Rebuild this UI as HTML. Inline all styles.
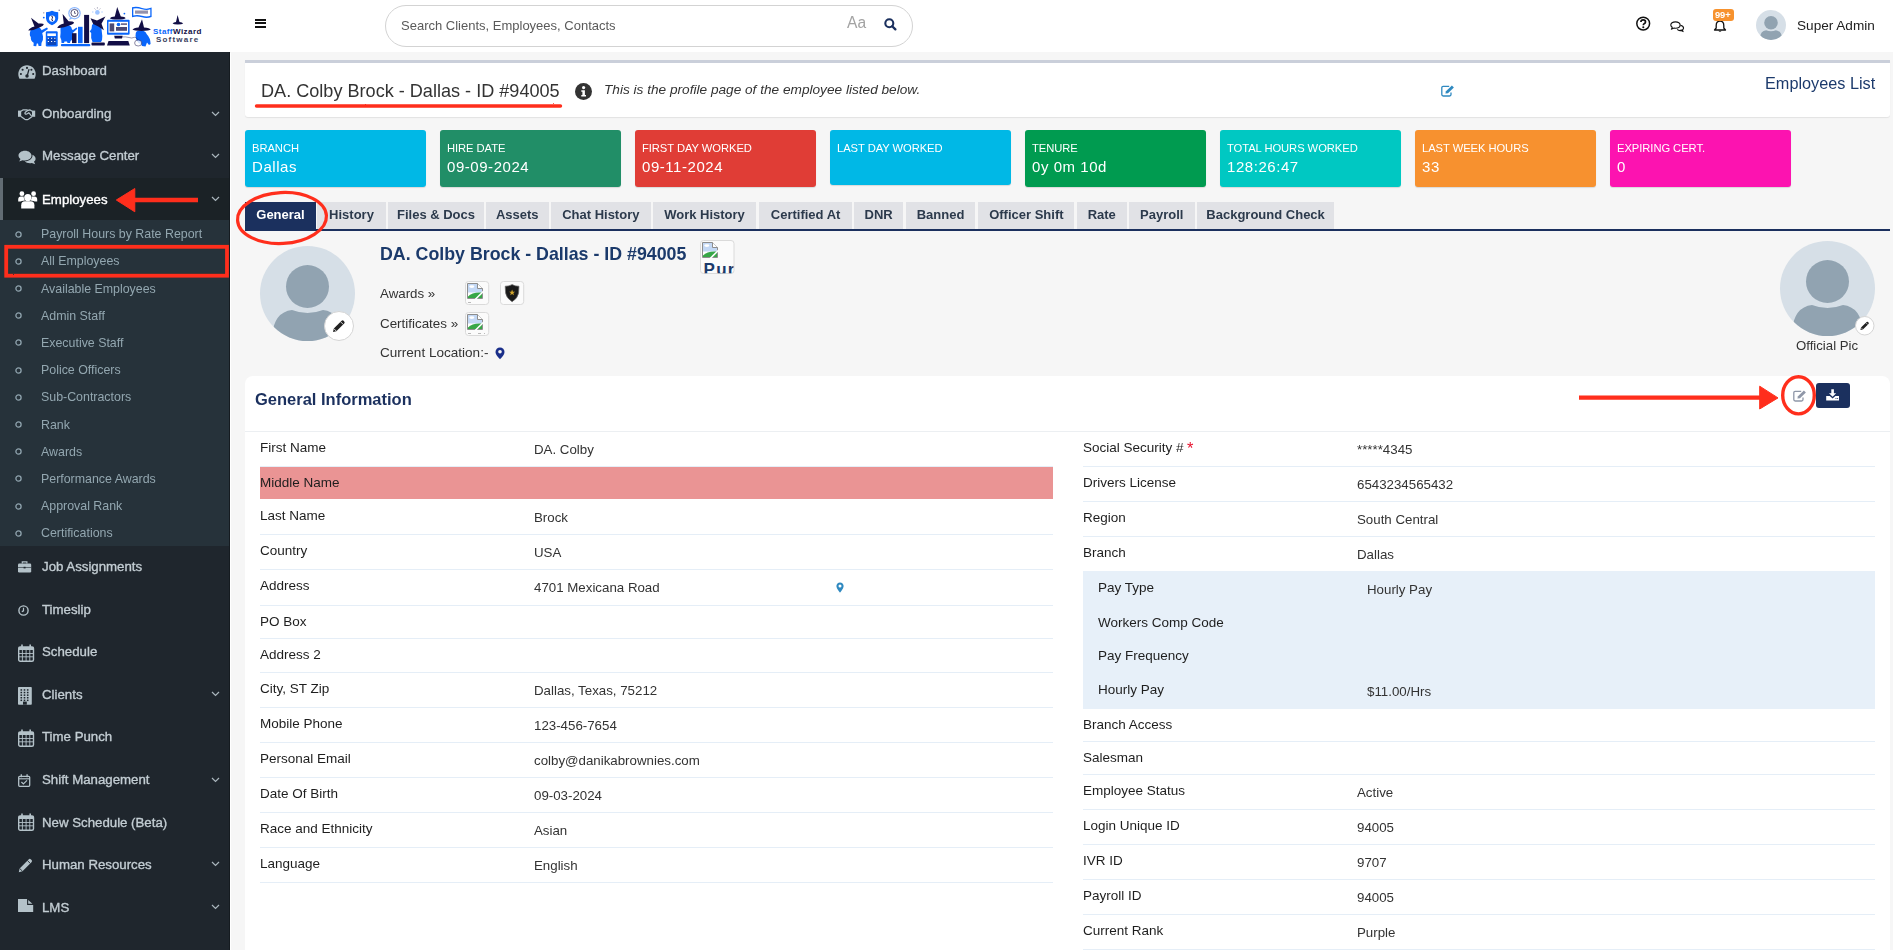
<!DOCTYPE html><html><head><meta charset="utf-8"><style>
html,body{margin:0;padding:0;}
body{width:1893px;height:950px;overflow:hidden;position:relative;background:#f6f6f6;font-family:"Liberation Sans", sans-serif;}
.t{position:absolute;white-space:nowrap;line-height:1;will-change:transform;}
.r{position:absolute;}
svg.r{overflow:visible;}
</style></head><body>
<div class="r" style="left:0px;top:0px;width:1893px;height:52px;background:#fff;"></div>
<svg class="r" style="left:0px;top:0px;" width="230" height="52" viewBox="0 0 230 52">
<g fill="#7fb0ff" opacity="0.9">
 <circle cx="74.5" cy="13.2" r="6.2"/>
 <path d="M70 17.5 L69 20 L72.5 18.6Z"/>
</g>
<circle cx="74.5" cy="13.2" r="5" fill="#fff"/>
<circle cx="74.5" cy="13" r="3.6" fill="none" stroke="#120e46" stroke-width="0.9" opacity="0.8"/>
<path d="M74.5 11 L74.5 13.3 L76 13.3" fill="none" stroke="#120e46" stroke-width="0.6"/>
<g fill="#0a66fb">
 <path d="M30.6 30 Q31 26.5 35.5 26.8 Q40.5 27 41.5 30 L43 36.5 Q43.5 40.5 41.5 43 L41.3 46 L38.6 46 L38 43.5 L36.8 43.5 L36.2 46.2 L33.5 46 L33.7 42.8 Q30.5 41 30.8 37 Q29 35.5 30.6 30Z"/>
 <path d="M40 31 L47 27.5 L48 29 L41.5 33.5Z"/>
 <rect x="45.8" y="31.2" width="11.9" height="15.3" rx="1.2"/>
 <path d="M46 12.3 Q49.5 12 52 10.8 Q54.6 12 58.2 12.3 L58.2 18.5 Q57.5 23 52 25.3 Q46.5 23 46 18.5Z"/>
 <path d="M60.5 28.5 Q61 24.8 66 24.8 Q71.5 25 72 29.5 L73 30 L76.5 27.6 L77.3 28.7 L72.7 33 L72.3 38.5 Q71.8 40.5 70.5 41 L70 43 L67.5 43 L67 41.5 L64.5 41.5 L64 43 L61.5 43 L61.3 40 Q59.5 37 60.6 33Z"/>
 <rect x="78" y="26.8" width="4.6" height="16.4"/>
 <rect x="60.9" y="44.1" width="29.4" height="2.2" rx="1"/>
 <path d="M92 25 Q93.5 22.5 97 23 Q100.5 24 101.5 29 L102.3 36 Q102.5 40 101 42 L92.5 42 Q90.5 38 91.2 33 L89.7 31.5 L91.5 29Z"/>
 <rect x="107" y="19.8" width="22.6" height="14.9" rx="1"/>
 <path d="M135.8 33 Q136.5 30.6 141 30.6 Q145.5 31 146.6 34 Q150.5 38 150.6 44 L149 45 L147 42.5 L145.5 46.5 L142 46 L141 44 Q137.5 43 136.5 40 Q134.8 36 135.8 33Z"/>
 <path d="M132 7.2 Q137 6 142 8 Q147 9.5 151.6 7.6 L151.6 17 Q147 18.8 142 17.3 Q137 15.8 132 17.2Z"/>
</g>
<g fill="#fff">
 <rect x="47.3" y="33.4" width="8.6" height="2.6"/>
 <circle cx="52.1" cy="18.6" r="3.1"/>
 <rect x="108.5" y="21.8" width="19.5" height="10.9"/>
 <path d="M133.3 8.6 Q137 7.6 142 9.3 Q147 10.8 150.3 9.3 L150.3 15.8 Q147 17.2 142 15.8 Q137 14.3 133.3 15.6Z"/>
</g>
<g fill="#120e46">
 <path d="M28.3 30.6 Q29.5 27.8 34.5 26.5 L31 17.8 L38.5 23.6 Q42.5 23 43.7 24 Q44 25.6 39.5 27.6 Q33.5 30.8 28.3 30.6Z"/>
 <path d="M57.2 27.8 Q58.5 25 63.8 23.5 L62.6 14.1 L68.6 21.3 Q73.3 21.4 74 22.5 Q74.2 24 69.2 25.6 Q62.5 28.6 57.2 27.8Z"/>
 <rect x="72" y="33.2" width="4.5" height="9.9"/>
 <rect x="84.1" y="14.9" width="5" height="28.2"/>
 <path d="M90.5 18.3 L97 20.5 L105.4 16.6 L101.5 23.8 L103.9 30.3 L98.3 26.4 L93.2 24.1Z"/>
 <rect x="91.5" y="42.6" width="13.3" height="3" rx="0.8"/>
 <path d="M109.8 18.2 Q111 16.8 114.8 16.6 L117.2 7 L120.8 16.6 Q125 16.8 125.6 18.3 Q124.5 19.6 117.7 19.6 Q111 19.6 109.8 18.2Z"/>
 <path d="M114.2 35.7 L122.6 35.7 L122 38.6 L114.8 38.6Z"/>
 <path d="M107 45.6 L108.5 41.1 L128.3 41.1 L129.8 45.6Z"/>
 <path d="M132.5 29.6 Q133.5 27.8 138.5 27.4 L142 19.3 L144 27.4 Q150 27.8 150.8 29.6 Q149.5 31 141.6 31 Q133.7 31 132.5 29.6Z"/>
 <path d="M172.6 23.4 Q173.5 22.2 176 22 L177.6 15 L179.5 22 Q182.4 22.2 183.2 23.4 Q182 24.4 177.8 24.4 Q173.6 24.4 172.6 23.4Z"/>
</g>
<g fill="#120e46" opacity="0.75">
 <rect x="109.6" y="23.4" width="4.6" height="8" />
 <rect x="116" y="27" width="11" height="3.8"/>
 <rect x="121" y="23.4" width="6" height="1.4"/>
 <rect x="135" y="10.5" width="13" height="3.2" opacity="0.6"/>
 <rect x="47.5" y="37.5" width="8.5" height="7.5" opacity="0.5"/>
</g>
<circle cx="118.5" cy="24.5" r="1.8" fill="#0a66fb"/>
<g fill="#fff"><rect x="47.8" y="37.8" width="1.2" height="1"/><rect x="51" y="37.8" width="1.2" height="1"/><rect x="54.2" y="37.8" width="1.2" height="1"/><rect x="47.8" y="41" width="1.2" height="1"/><rect x="51" y="41" width="1.2" height="1"/><rect x="54.2" y="41" width="1.2" height="1"/></g>
<path d="M51.3 16.2 Q53.5 16 52.2 18.5 Q51 20.6 53 20.8" fill="none" stroke="#120e46" stroke-width="0.9"/>
<g fill="#9cc3ff">
 <circle cx="97.4" cy="12.4" r="2.3"/>
 <path d="M92 12 L93.5 12 M101.3 12 L102.8 12" stroke="#9cc3ff" stroke-width="0.8"/>
</g>
<path d="M94.5 8.5 L95.5 9.5 M100.3 8.5 L99.3 9.5 M97.4 7.2 L97.4 8.6" stroke="#120e46" stroke-width="0.6" opacity="0.6"/>
<circle cx="124.4" cy="13.6" r="0.9" fill="#0a66fb"/>
<circle cx="43.8" cy="17.6" r="0.9" fill="#0a66fb"/>
<circle cx="43.8" cy="12.8" r="0.6" fill="#120e46" opacity="0.6"/>
<circle cx="59.2" cy="10.2" r="0.7" fill="#120e46" opacity="0.6"/>
<path d="M120.6 37 Q126 36.5 129 37.5 Q131.5 38.6 134.5 37.3 Q136.5 37 137.5 39.5" fill="none" stroke="#120e46" stroke-width="0.6" opacity="0.7"/>
<ellipse cx="138.2" cy="43" rx="3.6" ry="3" fill="#fff" stroke="#120e46" stroke-width="0.6" opacity="0.8"/>
<text x="153" y="33.6" font-family="Liberation Sans" font-weight="700" font-size="8" fill="#0a66fb" letter-spacing="0.44">Staff<tspan fill="#120e46">Wizard</tspan></text>
<text x="156" y="41.7" font-family="Liberation Sans" font-weight="700" font-size="8" fill="#3b3e5e" letter-spacing="1.2">Software</text>
</svg>
<div class="r" style="left:255px;top:18.5px;width:11px;height:2px;background:#111;"></div>
<div class="r" style="left:255px;top:22.4px;width:11px;height:2px;background:#111;"></div>
<div class="r" style="left:255px;top:26.2px;width:11px;height:2px;background:#111;"></div>
<div class="r" style="left:385px;top:5px;width:528px;height:42px;background:#fff;box-sizing:border-box;border:1px solid #d3d3d3;border-radius:21px;"></div>
<div class="t" style="left:400.5px;top:18.95px;font-size:13px;color:#5a5a5a;font-weight:400;font-style:normal;letter-spacing:0px;">Search Clients, Employees, Contacts</div>
<div class="t" style="left:847.2px;top:15.14px;font-size:15.6px;color:#a3a3a3;font-weight:400;font-style:normal;letter-spacing:0px;letter-spacing:0px;">Aa</div>
<svg class="r" style="left:883.6px;top:17.6px;" width="13" height="13" viewBox="0 0 13 13"><circle cx="5.3" cy="5.3" r="4.0" fill="none" stroke="#1b305e" stroke-width="2.1"/><path d="M8.2 8.2 L11.4 11.4" stroke="#1b305e" stroke-width="2.3" stroke-linecap="round"/></svg>
<svg class="r" style="left:1635px;top:16px;" width="16" height="16" viewBox="0 0 16 16"><circle cx="8.2" cy="7.6" r="6.4" fill="none" stroke="#111" stroke-width="1.5"/><path d="M5.9 6.1 Q5.9 3.9 8.2 3.9 Q10.5 3.9 10.5 5.9 Q10.5 7.1 9.1 7.8 Q8.3 8.2 8.3 9.3" fill="none" stroke="#111" stroke-width="1.7"/><circle cx="8.3" cy="11.3" r="1.05" fill="#111"/></svg>
<svg class="r" style="left:1670px;top:20.5px;" width="17" height="12" viewBox="0 0 17 12"><g transform="scale(0.88)"><path d="M6.2 1 C2.9 1 0.9 2.7 0.9 4.6 C0.9 5.7 1.5 6.6 2.5 7.2 L1.9 9.2 L4.6 8.0 C5.1 8.1 5.7 8.2 6.2 8.2 C9.5 8.2 11.5 6.5 11.5 4.6 C11.5 2.7 9.5 1 6.2 1Z" fill="none" stroke="#111" stroke-width="1.3"/><path d="M11.9 4.8 C14 5.3 15.4 6.5 15.4 8 C15.4 8.9 14.9 9.7 14.1 10.2 L14.6 11.6 L12.5 10.8 C10.9 11.1 9.2 10.6 8.2 9.6" fill="none" stroke="#111" stroke-width="1.3"/><path d="M12.5 9.2 L14.8 11.8 L11.5 10.8Z" fill="#111"/></g></svg>
<svg class="r" style="left:1713px;top:20px;" width="14" height="13" viewBox="0 0 14 13"><path d="M7 1.2 C4.3 1.2 3.2 3.4 3.2 5.4 L3.2 8 L1.5 10 L12.5 10 L10.8 8 L10.8 5.4 C10.8 3.4 9.7 1.2 7 1.2Z" fill="none" stroke="#111" stroke-width="1.3" stroke-linejoin="round"/><path d="M5.3 10.8 Q7 12.8 8.7 10.8Z" fill="#111"/></svg>
<div class="r" style="left:1713px;top:9px;width:21px;height:12px;background:#f7922e;border-radius:3px;"></div>
<div class="t" style="left:1715.3px;top:10.70px;font-size:9.3px;color:#fff;font-weight:700;font-style:normal;letter-spacing:0px;letter-spacing:-0.1px;">99+</div>
<svg class="r" style="left:1756.0px;top:10.0px;" width="30" height="30" viewBox="0 0 30 30"><defs><clipPath id="c1771"><circle cx="15.0" cy="15.0" r="15.0"/></clipPath></defs>
    <circle cx="15.0" cy="15.0" r="15.0" fill="#d6dfe7"/>
    <g clip-path="url(#c1771)" fill="#91a3b1">
      <circle cx="15.0" cy="12.789473684210526" r="6.789473684210526"/>
      <path d="M3.789473684210526 28.421052631578945 Q4.421052631578947 20.842105263157894 10.105263157894736 20.210526315789473 Q15.0 22.105263157894736 19.894736842105264 20.210526315789473 Q25.57894736842105 20.842105263157894 26.210526315789473 28.421052631578945 L26.210526315789473 31.57894736842105 L3.789473684210526 31.57894736842105Z"/>
    </g></svg>
<div class="t" style="left:1796.5px;top:19.14px;font-size:13.6px;color:#222;font-weight:400;font-style:normal;letter-spacing:0px;">Super Admin</div>
<div class="r" style="left:0px;top:52px;width:230px;height:898px;background:#1f262d;"></div>
<div class="r" style="left:0px;top:178px;width:230px;height:42px;background:#1b2226;"></div>
<div class="r" style="left:0px;top:178px;width:3px;height:42px;background:#626c73;"></div>
<div class="r" style="left:0px;top:220px;width:230px;height:326px;background:#26323a;"></div>
<svg class="r" style="left:17.6px;top:65.3px;" width="18" height="14" viewBox="0 0 18 14"><path d="M9 0.2 C4.1 0.2 0.3 4.2 0.3 9 C0.3 10.8 0.8 12.4 1.5 13.8 L16.5 13.8 C17.2 12.4 17.7 10.8 17.7 9 C17.7 4.2 13.9 0.2 9 0.2Z" fill="#b4c2c9"/><path d="M10.9 4.6 L9.2 10.8" stroke="#1f262d" stroke-width="1.3" stroke-linecap="round"/><circle cx="9" cy="10.9" r="1.75" fill="#1f262d"/><circle cx="9" cy="2.9" r="1.05" fill="#1f262d"/><circle cx="4.6" cy="4.8" r="1.05" fill="#1f262d"/><circle cx="13.4" cy="4.8" r="1.05" fill="#1f262d"/><circle cx="2.9" cy="9" r="1.05" fill="#1f262d"/><circle cx="15.2" cy="9" r="1.05" fill="#1f262d"/></svg>
<svg class="r" style="left:17.9px;top:109.3px;" width="17.2" height="11" viewBox="0 0 17.2 11"><rect x="0" y="1.6" width="3.2" height="6.2" fill="#b4c2c9"/><rect x="14" y="1.6" width="3.2" height="6.2" fill="#b4c2c9"/><path d="M3 2.2 L5.2 0.8 L8.6 0.8 L10 1.3 L11.8 0.8 L14.2 2.2" fill="none" stroke="#b4c2c9" stroke-width="1.2" stroke-linejoin="round"/><path d="M3 7.4 L6.8 10.2 Q8.6 11.2 10.4 10.2 L14.2 7.4" fill="none" stroke="#b4c2c9" stroke-width="1.2" stroke-linejoin="round"/><path d="M10 1.2 L7.3 3.3 Q6.4 4.6 7.6 5.1 Q8.6 5.5 9.8 4.4 L10.8 3.7 L13.6 7.1" fill="none" stroke="#b4c2c9" stroke-width="1.2" stroke-linejoin="round"/></svg>
<svg class="r" style="left:17.6px;top:150px;" width="18" height="15" viewBox="0 0 18 15"><path d="M7 0.8 C3.2 0.8 0.5 3 0.5 5.6 C0.5 7 1.3 8.2 2.5 9 L1.2 11.6 L4.6 10.2 C5.4 10.4 6.2 10.5 7 10.5 C10.8 10.5 13.5 8.3 13.5 5.6 C13.5 3 10.8 0.8 7 0.8Z" fill="#b4c2c9"/><path d="M14.5 4.8 C16.4 5.6 17.6 7.1 17.6 8.8 C17.6 10 17 11 16 11.8 L17.2 14.3 L13.8 13 C11 13.6 8.1 12.8 6.7 11.3 C11 11.4 14.8 9 14.5 4.8Z" fill="#b4c2c9"/></svg>
<svg class="r" style="left:17.6px;top:191px;" width="20" height="18" viewBox="0 0 20 18"><circle cx="9.8" cy="6.6" r="3.6" fill="#fff"/><circle cx="3.9" cy="2.7" r="2.4" fill="#fff"/><circle cx="15.6" cy="2.7" r="2.4" fill="#fff"/><path d="M3.2 17.4 L3.2 14.2 Q3.2 10.3 7 10.3 L12.6 10.3 Q16.4 10.3 16.4 14.2 L16.4 17.4Z" fill="#fff"/><path d="M0.2 10.6 L0.2 8.4 Q0.2 5.4 3 5.4 L5.6 5.4 Q5.8 8 7 9.4 Q3.2 9.8 2.6 10.6Z" fill="#fff"/><path d="M19.2 10.6 L19.2 8.4 Q19.2 5.4 16.4 5.4 L13.8 5.4 Q13.6 8 12.4 9.4 Q16.2 9.8 16.8 10.6Z" fill="#fff"/></svg>
<div class="t" style="left:41.5px;top:64.14px;font-size:13.25px;color:#c3cdd3;font-weight:400;font-style:normal;letter-spacing:0px;-webkit-text-stroke:0.35px #c3cdd3;">Dashboard</div>
<div class="t" style="left:41.5px;top:107.14px;font-size:13.25px;color:#c3cdd3;font-weight:400;font-style:normal;letter-spacing:0px;-webkit-text-stroke:0.35px #c3cdd3;">Onboarding</div>
<svg class="r" style="left:211px;top:111px;" width="9" height="6" viewBox="0 0 9 6"><path d="M1 1 L4.5 4.5 L8 1" fill="none" stroke="#aab6bd" stroke-width="1.2"/></svg>
<div class="t" style="left:41.5px;top:149.14px;font-size:13.25px;color:#c3cdd3;font-weight:400;font-style:normal;letter-spacing:0px;-webkit-text-stroke:0.35px #c3cdd3;">Message Center</div>
<svg class="r" style="left:211px;top:153px;" width="9" height="6" viewBox="0 0 9 6"><path d="M1 1 L4.5 4.5 L8 1" fill="none" stroke="#aab6bd" stroke-width="1.2"/></svg>
<div class="t" style="left:41.5px;top:192.54px;font-size:13.25px;color:#ffffff;font-weight:400;font-style:normal;letter-spacing:0px;-webkit-text-stroke:0.35px #ffffff;">Employees</div>
<svg class="r" style="left:211px;top:196px;" width="9" height="6" viewBox="0 0 9 6"><path d="M1 1 L4.5 4.5 L8 1" fill="none" stroke="#aab6bd" stroke-width="1.2"/></svg>
<svg class="r" style="left:14.5px;top:230.6px;" width="7" height="7" viewBox="0 0 7 7"><circle cx="3.5" cy="3.5" r="2.6" fill="none" stroke="#8fa3ad" stroke-width="1.3"/></svg>
<div class="t" style="left:41px;top:228.16px;font-size:12.4px;color:#93a7b0;font-weight:400;font-style:normal;letter-spacing:0px;">Payroll Hours by Rate Report</div>
<svg class="r" style="left:14.5px;top:257.79999999999995px;" width="7" height="7" viewBox="0 0 7 7"><circle cx="3.5" cy="3.5" r="2.6" fill="none" stroke="#8fa3ad" stroke-width="1.3"/></svg>
<div class="t" style="left:41px;top:255.36px;font-size:12.4px;color:#93a7b0;font-weight:400;font-style:normal;letter-spacing:0px;">All Employees</div>
<svg class="r" style="left:14.5px;top:284.99999999999994px;" width="7" height="7" viewBox="0 0 7 7"><circle cx="3.5" cy="3.5" r="2.6" fill="none" stroke="#8fa3ad" stroke-width="1.3"/></svg>
<div class="t" style="left:41px;top:282.56px;font-size:12.4px;color:#93a7b0;font-weight:400;font-style:normal;letter-spacing:0px;">Available Employees</div>
<svg class="r" style="left:14.5px;top:312.19999999999993px;" width="7" height="7" viewBox="0 0 7 7"><circle cx="3.5" cy="3.5" r="2.6" fill="none" stroke="#8fa3ad" stroke-width="1.3"/></svg>
<div class="t" style="left:41px;top:309.76px;font-size:12.4px;color:#93a7b0;font-weight:400;font-style:normal;letter-spacing:0px;">Admin Staff</div>
<svg class="r" style="left:14.5px;top:339.4px;" width="7" height="7" viewBox="0 0 7 7"><circle cx="3.5" cy="3.5" r="2.6" fill="none" stroke="#8fa3ad" stroke-width="1.3"/></svg>
<div class="t" style="left:41px;top:336.96px;font-size:12.4px;color:#93a7b0;font-weight:400;font-style:normal;letter-spacing:0px;">Executive Staff</div>
<svg class="r" style="left:14.5px;top:366.59999999999997px;" width="7" height="7" viewBox="0 0 7 7"><circle cx="3.5" cy="3.5" r="2.6" fill="none" stroke="#8fa3ad" stroke-width="1.3"/></svg>
<div class="t" style="left:41px;top:364.16px;font-size:12.4px;color:#93a7b0;font-weight:400;font-style:normal;letter-spacing:0px;">Police Officers</div>
<svg class="r" style="left:14.5px;top:393.79999999999995px;" width="7" height="7" viewBox="0 0 7 7"><circle cx="3.5" cy="3.5" r="2.6" fill="none" stroke="#8fa3ad" stroke-width="1.3"/></svg>
<div class="t" style="left:41px;top:391.36px;font-size:12.4px;color:#93a7b0;font-weight:400;font-style:normal;letter-spacing:0px;">Sub-Contractors</div>
<svg class="r" style="left:14.5px;top:421.0px;" width="7" height="7" viewBox="0 0 7 7"><circle cx="3.5" cy="3.5" r="2.6" fill="none" stroke="#8fa3ad" stroke-width="1.3"/></svg>
<div class="t" style="left:41px;top:418.56px;font-size:12.4px;color:#93a7b0;font-weight:400;font-style:normal;letter-spacing:0px;">Rank</div>
<svg class="r" style="left:14.5px;top:448.19999999999993px;" width="7" height="7" viewBox="0 0 7 7"><circle cx="3.5" cy="3.5" r="2.6" fill="none" stroke="#8fa3ad" stroke-width="1.3"/></svg>
<div class="t" style="left:41px;top:445.76px;font-size:12.4px;color:#93a7b0;font-weight:400;font-style:normal;letter-spacing:0px;">Awards</div>
<svg class="r" style="left:14.5px;top:475.4px;" width="7" height="7" viewBox="0 0 7 7"><circle cx="3.5" cy="3.5" r="2.6" fill="none" stroke="#8fa3ad" stroke-width="1.3"/></svg>
<div class="t" style="left:41px;top:472.96px;font-size:12.4px;color:#93a7b0;font-weight:400;font-style:normal;letter-spacing:0px;">Performance Awards</div>
<svg class="r" style="left:14.5px;top:502.59999999999997px;" width="7" height="7" viewBox="0 0 7 7"><circle cx="3.5" cy="3.5" r="2.6" fill="none" stroke="#8fa3ad" stroke-width="1.3"/></svg>
<div class="t" style="left:41px;top:500.16px;font-size:12.4px;color:#93a7b0;font-weight:400;font-style:normal;letter-spacing:0px;">Approval Rank</div>
<svg class="r" style="left:14.5px;top:529.8px;" width="7" height="7" viewBox="0 0 7 7"><circle cx="3.5" cy="3.5" r="2.6" fill="none" stroke="#8fa3ad" stroke-width="1.3"/></svg>
<div class="t" style="left:41px;top:527.36px;font-size:12.4px;color:#93a7b0;font-weight:400;font-style:normal;letter-spacing:0px;">Certifications</div>
<div class="t" style="left:41.5px;top:560.04px;font-size:13.25px;color:#c3cdd3;font-weight:400;font-style:normal;letter-spacing:0px;-webkit-text-stroke:0.35px #c3cdd3;">Job Assignments</div>
<div class="t" style="left:41.5px;top:603.14px;font-size:13.25px;color:#c3cdd3;font-weight:400;font-style:normal;letter-spacing:0px;-webkit-text-stroke:0.35px #c3cdd3;">Timeslip</div>
<div class="t" style="left:41.5px;top:645.14px;font-size:13.25px;color:#c3cdd3;font-weight:400;font-style:normal;letter-spacing:0px;-webkit-text-stroke:0.35px #c3cdd3;">Schedule</div>
<div class="t" style="left:41.5px;top:687.64px;font-size:13.25px;color:#c3cdd3;font-weight:400;font-style:normal;letter-spacing:0px;-webkit-text-stroke:0.35px #c3cdd3;">Clients</div>
<svg class="r" style="left:211px;top:690.9px;" width="9" height="6" viewBox="0 0 9 6"><path d="M1 1 L4.5 4.5 L8 1" fill="none" stroke="#aab6bd" stroke-width="1.2"/></svg>
<div class="t" style="left:41.5px;top:730.24px;font-size:13.25px;color:#c3cdd3;font-weight:400;font-style:normal;letter-spacing:0px;-webkit-text-stroke:0.35px #c3cdd3;">Time Punch</div>
<div class="t" style="left:41.5px;top:773.24px;font-size:13.25px;color:#c3cdd3;font-weight:400;font-style:normal;letter-spacing:0px;-webkit-text-stroke:0.35px #c3cdd3;">Shift Management</div>
<svg class="r" style="left:211px;top:776.5px;" width="9" height="6" viewBox="0 0 9 6"><path d="M1 1 L4.5 4.5 L8 1" fill="none" stroke="#aab6bd" stroke-width="1.2"/></svg>
<div class="t" style="left:41.5px;top:815.54px;font-size:13.25px;color:#c3cdd3;font-weight:400;font-style:normal;letter-spacing:0px;-webkit-text-stroke:0.35px #c3cdd3;">New Schedule (Beta)</div>
<div class="t" style="left:41.5px;top:857.94px;font-size:13.25px;color:#c3cdd3;font-weight:400;font-style:normal;letter-spacing:0px;-webkit-text-stroke:0.35px #c3cdd3;">Human Resources</div>
<svg class="r" style="left:211px;top:861.2px;" width="9" height="6" viewBox="0 0 9 6"><path d="M1 1 L4.5 4.5 L8 1" fill="none" stroke="#aab6bd" stroke-width="1.2"/></svg>
<div class="t" style="left:41.5px;top:900.74px;font-size:13.25px;color:#c3cdd3;font-weight:400;font-style:normal;letter-spacing:0px;-webkit-text-stroke:0.35px #c3cdd3;">LMS</div>
<svg class="r" style="left:211px;top:904.0px;" width="9" height="6" viewBox="0 0 9 6"><path d="M1 1 L4.5 4.5 L8 1" fill="none" stroke="#aab6bd" stroke-width="1.2"/></svg>
<svg class="r" style="left:18px;top:561px;" width="13.2" height="11.5" viewBox="0 0 13.2 11.5"><rect x="0" y="2.5" width="13.2" height="9" rx="1.2" fill="#b4c2c9"/><path d="M4.3 2.5 L4.3 0.9 L8.9 0.9 L8.9 2.5" fill="none" stroke="#b4c2c9" stroke-width="1.2"/><rect x="5.6" y="5.8" width="2" height="1.6" fill="#1f262d"/><path d="M0 6.5 H13.2" stroke="#1f262d" stroke-width="0.6"/></svg>
<svg class="r" style="left:18px;top:605.3px;" width="11" height="11" viewBox="0 0 11 11"><circle cx="5.5" cy="5.5" r="4.6" fill="none" stroke="#b4c2c9" stroke-width="1.4"/><path d="M5.5 2.8 L5.5 5.8 L3.8 6.6" fill="none" stroke="#b4c2c9" stroke-width="1.2"/></svg>
<svg class="r" style="left:18px;top:643.7px;" width="16.2" height="18" viewBox="0 0 16.2 18"><rect x="0.7" y="3" width="14.8" height="14.3" rx="1.5" fill="none" stroke="#b4c2c9" stroke-width="1.4"/><rect x="0.7" y="3" width="14.8" height="3" fill="#b4c2c9"/><path d="M4 0.5 L4 4.5 M12.2 0.5 L12.2 4.5" stroke="#b4c2c9" stroke-width="1.6"/><path d="M0.7 9.5 H15.5 M0.7 12.8 H15.5 M4.4 6 V17.3 M8.1 6 V17.3 M11.8 6 V17.3" stroke="#b4c2c9" stroke-width="0.9"/></svg>
<svg class="r" style="left:18px;top:686.7px;" width="13.8" height="17.7" viewBox="0 0 13.8 17.7"><rect x="0" y="0" width="13.8" height="17.7" rx="0.8" fill="#b4c2c9"/><rect x="2.5" y="2.2" width="1.6" height="1.5" fill="#1f262d"/><rect x="2.5" y="4.8" width="1.6" height="1.5" fill="#1f262d"/><rect x="2.5" y="7.4" width="1.6" height="1.5" fill="#1f262d"/><rect x="2.5" y="10.0" width="1.6" height="1.5" fill="#1f262d"/><rect x="2.5" y="12.6" width="1.6" height="1.5" fill="#1f262d"/><rect x="5.7" y="2.2" width="1.6" height="1.5" fill="#1f262d"/><rect x="5.7" y="4.8" width="1.6" height="1.5" fill="#1f262d"/><rect x="5.7" y="7.4" width="1.6" height="1.5" fill="#1f262d"/><rect x="5.7" y="10.0" width="1.6" height="1.5" fill="#1f262d"/><rect x="5.7" y="12.6" width="1.6" height="1.5" fill="#1f262d"/><rect x="8.9" y="2.2" width="1.6" height="1.5" fill="#1f262d"/><rect x="8.9" y="4.8" width="1.6" height="1.5" fill="#1f262d"/><rect x="8.9" y="7.4" width="1.6" height="1.5" fill="#1f262d"/><rect x="8.9" y="10.0" width="1.6" height="1.5" fill="#1f262d"/><rect x="8.9" y="12.6" width="1.6" height="1.5" fill="#1f262d"/><rect x="5" y="14.6" width="3.8" height="3.1" fill="#1f262d"/></svg>
<svg class="r" style="left:18px;top:728.5px;" width="16.2" height="18" viewBox="0 0 16.2 18"><rect x="0.7" y="3" width="14.8" height="14.3" rx="1.5" fill="none" stroke="#b4c2c9" stroke-width="1.4"/><rect x="0.7" y="3" width="14.8" height="3" fill="#b4c2c9"/><path d="M4 0.5 L4 4.5 M12.2 0.5 L12.2 4.5" stroke="#b4c2c9" stroke-width="1.6"/><path d="M0.7 9.5 H15.5 M0.7 12.8 H15.5 M4.4 6 V17.3 M8.1 6 V17.3 M11.8 6 V17.3" stroke="#b4c2c9" stroke-width="0.9"/></svg>
<svg class="r" style="left:18px;top:774px;" width="12.4" height="13" viewBox="0 0 12.4 13"><rect x="0.7" y="2.3" width="11" height="10" rx="1" fill="none" stroke="#b4c2c9" stroke-width="1.3"/><path d="M0.7 4.8 H11.7" stroke="#b4c2c9" stroke-width="1.1"/><path d="M3.3 0.3 V3.3 M9.1 0.3 V3.3" stroke="#b4c2c9" stroke-width="1.3"/><path d="M3.4 8 L5.4 10 L9 6.4" fill="none" stroke="#b4c2c9" stroke-width="1.2"/></svg>
<svg class="r" style="left:18px;top:813.3px;" width="16.2" height="18" viewBox="0 0 16.2 18"><rect x="0.7" y="3" width="14.8" height="14.3" rx="1.5" fill="none" stroke="#b4c2c9" stroke-width="1.4"/><rect x="0.7" y="3" width="14.8" height="3" fill="#b4c2c9"/><path d="M4 0.5 L4 4.5 M12.2 0.5 L12.2 4.5" stroke="#b4c2c9" stroke-width="1.6"/><path d="M0.7 9.5 H15.5 M0.7 12.8 H15.5 M4.4 6 V17.3 M8.1 6 V17.3 M11.8 6 V17.3" stroke="#b4c2c9" stroke-width="0.9"/></svg>
<svg class="r" style="left:18px;top:858.2px;" width="14.8" height="15" viewBox="0 0 14.8 15"><path d="M0.8 14.2 L1.6 10.4 L10.6 1.4 Q11.8 0.3 13 1.4 L13.6 2 Q14.6 3.1 13.5 4.2 L4.5 13.2Z" fill="#b4c2c9"/><path d="M1.6 10.4 L4.5 13.2" stroke="#1f262d" stroke-width="0.9"/><path d="M9.5 2.6 L12.3 5.4" stroke="#1f262d" stroke-width="0.9"/></svg>
<svg class="r" style="left:17.8px;top:899px;" width="15.2" height="13.1" viewBox="0 0 15.2 13.1"><path d="M0 0 L9.1 0 L9.1 5.9 L15.2 5.9 L15.2 13.1 L0 13.1Z" fill="#b4c2c9"/><path d="M10.2 1 L14.4 4.8 L10.2 4.8Z" fill="#b4c2c9"/></svg>
<div class="r" style="left:229px;top:52px;width:1px;height:898px;background:#151b20;"></div>
<div class="r" style="left:230px;top:53px;width:1px;height:897px;background:#ffffff;"></div>
<div class="r" style="left:245px;top:60px;width:1645px;height:57px;background:#fff;border-top:3px solid #cacfda;box-sizing:border-box;border-radius:0 0 3px 3px;box-shadow:0 1px 1px rgba(0,0,0,0.08);"></div>
<div class="t" style="left:260.5px;top:82.41px;font-size:18.1px;color:#333;font-weight:400;font-style:normal;letter-spacing:0px;">DA. Colby Brock - Dallas - ID #94005</div>
<svg class="r" style="left:575px;top:82.5px;" width="17" height="17" viewBox="0 0 17 17"><circle cx="8.5" cy="8.5" r="8.5" fill="#333"/><circle cx="8.6" cy="4.6" r="1.6" fill="#fff"/><path d="M6.3 7.2 L9.9 7.2 L9.9 11.9 L11 11.9 L11 13.4 L6.3 13.4 L6.3 11.9 L7.4 11.9 L7.4 8.7 L6.3 8.7Z" fill="#fff"/></svg>
<div class="t" style="left:603.5px;top:82.70px;font-size:13.65px;color:#333;font-weight:400;font-style:italic;letter-spacing:0px;">This is the profile page of the employee listed below.</div>
<svg class="r" style="left:1440.5px;top:85px;" width="14.0" height="12.0" viewBox="0 0 14.0 12.0"><g transform="scale(1.0)"><path d="M8.2 1.4 L2.2 1.4 Q0.8 1.4 0.8 2.8 L0.8 9.6 Q0.8 11 2.2 11 L8.6 11 Q10 11 10 9.6 L10 7.6" fill="none" stroke="#2f89c0" stroke-width="1.3"/><path d="M4.4 8.4 L5 6.3 L10.9 0.5 L12.9 2.5 L7 8.3Z" fill="#2f89c0"/></g></svg>
<div class="t" style="left:1764.6px;top:74.99px;font-size:16.25px;color:#1c3a6c;font-weight:400;font-style:normal;letter-spacing:0px;">Employees List</div>
<div class="r" style="left:245px;top:130px;width:181px;height:57px;background:#00b8e6;border-radius:3px;box-shadow:0 1px 1px rgba(0,0,0,0.12);"></div>
<div class="t" style="left:251.5px;top:143.28px;font-size:11.2px;color:#fff;font-weight:400;font-style:normal;letter-spacing:0px;letter-spacing:-0.05px;">BRANCH</div>
<div class="t" style="left:251.5px;top:159.25px;font-size:15px;color:#fff;font-weight:400;font-style:normal;letter-spacing:0px;letter-spacing:0.55px;">Dallas</div>
<div class="r" style="left:440px;top:130px;width:181px;height:57px;background:#218e67;border-radius:3px;box-shadow:0 1px 1px rgba(0,0,0,0.12);"></div>
<div class="t" style="left:446.5px;top:143.28px;font-size:11.2px;color:#fff;font-weight:400;font-style:normal;letter-spacing:0px;letter-spacing:-0.05px;">HIRE DATE</div>
<div class="t" style="left:446.5px;top:159.25px;font-size:15px;color:#fff;font-weight:400;font-style:normal;letter-spacing:0px;letter-spacing:0.55px;">09-09-2024</div>
<div class="r" style="left:635px;top:130px;width:181px;height:57px;background:#e03d36;border-radius:3px;box-shadow:0 1px 1px rgba(0,0,0,0.12);"></div>
<div class="t" style="left:641.5px;top:143.28px;font-size:11.2px;color:#fff;font-weight:400;font-style:normal;letter-spacing:0px;letter-spacing:-0.05px;">FIRST DAY WORKED</div>
<div class="t" style="left:641.5px;top:159.25px;font-size:15px;color:#fff;font-weight:400;font-style:normal;letter-spacing:0px;letter-spacing:0.55px;">09-11-2024</div>
<div class="r" style="left:830px;top:130px;width:181px;height:55px;background:#00b8e6;border-radius:3px;box-shadow:0 1px 1px rgba(0,0,0,0.12);"></div>
<div class="t" style="left:836.5px;top:143.28px;font-size:11.2px;color:#fff;font-weight:400;font-style:normal;letter-spacing:0px;letter-spacing:-0.05px;">LAST DAY WORKED</div>
<div class="r" style="left:1025px;top:130px;width:181px;height:57px;background:#009b50;border-radius:3px;box-shadow:0 1px 1px rgba(0,0,0,0.12);"></div>
<div class="t" style="left:1031.5px;top:143.28px;font-size:11.2px;color:#fff;font-weight:400;font-style:normal;letter-spacing:0px;letter-spacing:-0.05px;">TENURE</div>
<div class="t" style="left:1031.5px;top:159.25px;font-size:15px;color:#fff;font-weight:400;font-style:normal;letter-spacing:0px;letter-spacing:0.55px;">0y 0m 10d</div>
<div class="r" style="left:1220px;top:130px;width:181px;height:57px;background:#00c8c2;border-radius:3px;box-shadow:0 1px 1px rgba(0,0,0,0.12);"></div>
<div class="t" style="left:1226.5px;top:143.28px;font-size:11.2px;color:#fff;font-weight:400;font-style:normal;letter-spacing:0px;letter-spacing:-0.05px;">TOTAL HOURS WORKED</div>
<div class="t" style="left:1226.5px;top:159.25px;font-size:15px;color:#fff;font-weight:400;font-style:normal;letter-spacing:0px;letter-spacing:0.55px;">128:26:47</div>
<div class="r" style="left:1415px;top:130px;width:181px;height:57px;background:#f7912f;border-radius:3px;box-shadow:0 1px 1px rgba(0,0,0,0.12);"></div>
<div class="t" style="left:1421.5px;top:143.28px;font-size:11.2px;color:#fff;font-weight:400;font-style:normal;letter-spacing:0px;letter-spacing:-0.05px;">LAST WEEK HOURS</div>
<div class="t" style="left:1421.5px;top:159.25px;font-size:15px;color:#fff;font-weight:400;font-style:normal;letter-spacing:0px;letter-spacing:0.55px;">33</div>
<div class="r" style="left:1610px;top:130px;width:181px;height:57px;background:#fc13b0;border-radius:3px;box-shadow:0 1px 1px rgba(0,0,0,0.12);"></div>
<div class="t" style="left:1616.5px;top:143.28px;font-size:11.2px;color:#fff;font-weight:400;font-style:normal;letter-spacing:0px;letter-spacing:-0.05px;">EXPIRING CERT.</div>
<div class="t" style="left:1616.5px;top:159.25px;font-size:15px;color:#fff;font-weight:400;font-style:normal;letter-spacing:0px;letter-spacing:0.55px;">0</div>
<div class="r" style="left:245px;top:202px;width:71px;height:27px;background:#1b305e;"></div>
<div class="t" style="left:245px;top:207.75px;width:71px;text-align:center;font-size:13px;font-weight:700;color:#fff;">General</div>
<div class="r" style="left:317px;top:202px;width:69px;height:27px;background:#e1e2e6;"></div>
<div class="t" style="left:317px;top:207.75px;width:69px;text-align:center;font-size:13px;font-weight:700;color:#2c3a4c;">History</div>
<div class="r" style="left:388px;top:202px;width:96px;height:27px;background:#e1e2e6;"></div>
<div class="t" style="left:388px;top:207.75px;width:96px;text-align:center;font-size:13px;font-weight:700;color:#2c3a4c;">Files &amp; Docs</div>
<div class="r" style="left:486px;top:202px;width:62.5px;height:27px;background:#e1e2e6;"></div>
<div class="t" style="left:486px;top:207.75px;width:62.5px;text-align:center;font-size:13px;font-weight:700;color:#2c3a4c;">Assets</div>
<div class="r" style="left:551px;top:202px;width:99.60000000000002px;height:27px;background:#e1e2e6;"></div>
<div class="t" style="left:551px;top:207.75px;width:99.60000000000002px;text-align:center;font-size:13px;font-weight:700;color:#2c3a4c;">Chat History</div>
<div class="r" style="left:653px;top:202px;width:103px;height:27px;background:#e1e2e6;"></div>
<div class="t" style="left:653px;top:207.75px;width:103px;text-align:center;font-size:13px;font-weight:700;color:#2c3a4c;">Work History</div>
<div class="r" style="left:758.5px;top:202px;width:93.20000000000005px;height:27px;background:#e1e2e6;"></div>
<div class="t" style="left:758.5px;top:207.75px;width:93.20000000000005px;text-align:center;font-size:13px;font-weight:700;color:#2c3a4c;">Certified At</div>
<div class="r" style="left:854.2px;top:202px;width:49.19999999999993px;height:27px;background:#e1e2e6;"></div>
<div class="t" style="left:854.2px;top:207.75px;width:49.19999999999993px;text-align:center;font-size:13px;font-weight:700;color:#2c3a4c;">DNR</div>
<div class="r" style="left:906.2px;top:202px;width:69.09999999999991px;height:27px;background:#e1e2e6;"></div>
<div class="t" style="left:906.2px;top:207.75px;width:69.09999999999991px;text-align:center;font-size:13px;font-weight:700;color:#2c3a4c;">Banned</div>
<div class="r" style="left:977.8px;top:202px;width:96.70000000000005px;height:27px;background:#e1e2e6;"></div>
<div class="t" style="left:977.8px;top:207.75px;width:96.70000000000005px;text-align:center;font-size:13px;font-weight:700;color:#2c3a4c;">Officer Shift</div>
<div class="r" style="left:1077px;top:202px;width:49.5px;height:27px;background:#e1e2e6;"></div>
<div class="t" style="left:1077px;top:207.75px;width:49.5px;text-align:center;font-size:13px;font-weight:700;color:#2c3a4c;">Rate</div>
<div class="r" style="left:1129px;top:202px;width:65.59999999999991px;height:27px;background:#e1e2e6;"></div>
<div class="t" style="left:1129px;top:207.75px;width:65.59999999999991px;text-align:center;font-size:13px;font-weight:700;color:#2c3a4c;">Payroll</div>
<div class="r" style="left:1197.2px;top:202px;width:137.20000000000005px;height:27px;background:#e1e2e6;"></div>
<div class="t" style="left:1197.2px;top:207.75px;width:137.20000000000005px;text-align:center;font-size:13px;font-weight:700;color:#2c3a4c;">Background Check</div>
<div class="r" style="left:245px;top:229px;width:1645px;height:2px;background:#1b305e;"></div>
<svg class="r" style="left:259.8px;top:246.0px;" width="95" height="95" viewBox="0 0 95 95"><defs><clipPath id="c307"><circle cx="47.5" cy="47.5" r="47.5"/></clipPath></defs>
    <circle cx="47.5" cy="47.5" r="47.5" fill="#d6dfe7"/>
    <g clip-path="url(#c307)" fill="#91a3b1">
      <circle cx="47.5" cy="40.5" r="21.5"/>
      <path d="M12.0 90.0 Q14.0 66.0 32.0 64.0 Q47.5 70.0 63.0 64.0 Q81.0 66.0 83.0 90.0 L83.0 100.0 L12.0 100.0Z"/>
    </g></svg>
<svg class="r" style="left:324.0px;top:311.0px;" width="30" height="30" viewBox="0 0 30 30"><circle cx="15.0" cy="15.0" r="14.5" fill="#fff" stroke="#d5d5d5" stroke-width="1"/><g transform="translate(15.0,15.0) scale(1.0) translate(-7,-7)"><path d="M1 13 L1.8 9.6 L9.6 1.8 Q10.6 0.8 11.6 1.8 L12.2 2.4 Q13.2 3.4 12.2 4.4 L4.4 12.2Z" fill="#222"/><path d="M1.8 9.6 L4.4 12.2" stroke="#fff" stroke-width="0.8"/><path d="M8.6 2.8 L11.2 5.4" stroke="#fff" stroke-width="0.8"/></g></svg>
<div class="t" style="left:380px;top:246.47px;font-size:17.8px;color:#1b3a6b;font-weight:700;font-style:normal;letter-spacing:0px;">DA. Colby Brock - Dallas - ID #94005</div>
<svg class="r" style="left:700px;top:239.6px;" width="34.5" height="34" viewBox="0 0 34.5 34"><rect x="0.5" y="0.5" width="33.5" height="33" rx="3" fill="#fbfbfb" stroke="#dadada"/><g transform="translate(2,2)"><path d="M0.5 0.5 H10.5 L15.5 5.5 V15.5 H0.5Z" fill="#fff" stroke="#8d8d8d" stroke-width="1"/><path d="M1 1 H10.3 L15 5.7 V9.5 H1Z" fill="#c3d8f5"/><ellipse cx="4.8" cy="3.6" rx="2.6" ry="1.3" fill="#fff"/><path d="M1 13.6 Q5.5 8.8 15 9.6 V15 H1Z" fill="#37a747"/><path d="M10.5 0.5 V5.5 H15.5" fill="#fff" stroke="#8d8d8d" stroke-width="1"/><path d="M8.2 16.5 L16.5 8.2" stroke="#fff" stroke-width="1.6"/></g><clipPath id="pc"><rect x="1" y="1" width="32.5" height="32.2"/></clipPath><text clip-path="url(#pc)" x="3.6" y="35.2" font-family="Liberation Sans" font-weight="700" font-size="17" fill="#1b3a6b" letter-spacing="1.2">Pur</text></svg>
<div class="t" style="left:380px;top:287.39px;font-size:13.3px;color:#333;font-weight:400;font-style:normal;letter-spacing:0px;">Awards »</div>
<svg class="r" style="left:465.3px;top:281.4px;" width="24.2" height="24" viewBox="0 0 24.2 24"><rect x="0.5" y="0.5" width="23.2" height="23" rx="3" fill="#fbfbfb" stroke="#dadada"/><g transform="translate(2,2)"><path d="M0.5 0.5 H10.5 L15.5 5.5 V15.5 H0.5Z" fill="#fff" stroke="#8d8d8d" stroke-width="1"/><path d="M1 1 H10.3 L15 5.7 V9.5 H1Z" fill="#c3d8f5"/><ellipse cx="4.8" cy="3.6" rx="2.6" ry="1.3" fill="#fff"/><path d="M1 13.6 Q5.5 8.8 15 9.6 V15 H1Z" fill="#37a747"/><path d="M10.5 0.5 V5.5 H15.5" fill="#fff" stroke="#8d8d8d" stroke-width="1"/><path d="M8.2 16.5 L16.5 8.2" stroke="#fff" stroke-width="1.6"/></g><rect x="3" y="21" width="3" height="0.8" fill="#aaa"/></svg>
<svg class="r" style="left:500.2px;top:281.4px;" width="24.2" height="24" viewBox="0 0 24.2 24"><rect x="0.5" y="0.5" width="23.2" height="23" rx="3" fill="#fbfbfb" stroke="#dadada"/><path d="M12.1 3.6 Q15.5 5.4 19 5.2 L18.6 12 Q18 17 12.1 20.8 Q6.2 17 5.6 12 L5.2 5.2 Q8.7 5.4 12.1 3.6Z" fill="#1a1a1a" stroke="#6a6a6a" stroke-width="0.7"/><path d="M12.1 8.6 L12.9 10.8 L15.1 10.8 L13.3 12.1 L14 14.3 L12.1 13 L10.2 14.3 L10.9 12.1 L9.1 10.8 L11.3 10.8Z" fill="#d4a72c"/></svg>
<div class="t" style="left:380px;top:317.01px;font-size:13.4px;color:#333;font-weight:400;font-style:normal;letter-spacing:0px;">Certificates »</div>
<svg class="r" style="left:465.3px;top:311.6px;" width="24.2" height="24" viewBox="0 0 24.2 24"><rect x="0.5" y="0.5" width="23.2" height="23" rx="3" fill="#fbfbfb" stroke="#dadada"/><g transform="translate(2,2)"><path d="M0.5 0.5 H10.5 L15.5 5.5 V15.5 H0.5Z" fill="#fff" stroke="#8d8d8d" stroke-width="1"/><path d="M1 1 H10.3 L15 5.7 V9.5 H1Z" fill="#c3d8f5"/><ellipse cx="4.8" cy="3.6" rx="2.6" ry="1.3" fill="#fff"/><path d="M1 13.6 Q5.5 8.8 15 9.6 V15 H1Z" fill="#37a747"/><path d="M10.5 0.5 V5.5 H15.5" fill="#fff" stroke="#8d8d8d" stroke-width="1"/><path d="M8.2 16.5 L16.5 8.2" stroke="#fff" stroke-width="1.6"/></g><rect x="3" y="21" width="3" height="0.8" fill="#aaa"/><rect x="13" y="21" width="3" height="0.8" fill="#aaa"/><rect x="19" y="21" width="1" height="0.8" fill="#aaa"/></svg>
<div class="t" style="left:380px;top:346.48px;font-size:13.55px;color:#333;font-weight:400;font-style:normal;letter-spacing:0px;">Current Location:-</div>
<svg class="r" style="left:495px;top:346.8px;" width="10" height="12.5" viewBox="0 0 10 12.5"><path d="M5 0.5 C2.4 0.5 0.5 2.4 0.5 5 C0.5 8 5 12.3 5 12.3 C5 12.3 9.5 8 9.5 5 C9.5 2.4 7.6 0.5 5 0.5Z" fill="#1a2f8a"/><circle cx="5" cy="4.8" r="1.8" fill="#f6f6f6"/></svg>
<svg class="r" style="left:1779.9px;top:240.8px;" width="95" height="95" viewBox="0 0 95 95"><defs><clipPath id="c1827"><circle cx="47.5" cy="47.5" r="47.5"/></clipPath></defs>
    <circle cx="47.5" cy="47.5" r="47.5" fill="#d6dfe7"/>
    <g clip-path="url(#c1827)" fill="#91a3b1">
      <circle cx="47.5" cy="40.5" r="21.5"/>
      <path d="M12.0 90.0 Q14.0 66.0 32.0 64.0 Q47.5 70.0 63.0 64.0 Q81.0 66.0 83.0 90.0 L83.0 100.0 L12.0 100.0Z"/>
    </g></svg>
<svg class="r" style="left:1855.25px;top:316.25px;" width="19.5" height="19.5" viewBox="0 0 19.5 19.5"><circle cx="9.75" cy="9.75" r="9.25" fill="#fff" stroke="#d5d5d5" stroke-width="1"/><g transform="translate(9.75,9.75) scale(0.72) translate(-7,-7)"><path d="M1 13 L1.8 9.6 L9.6 1.8 Q10.6 0.8 11.6 1.8 L12.2 2.4 Q13.2 3.4 12.2 4.4 L4.4 12.2Z" fill="#222"/><path d="M1.8 9.6 L4.4 12.2" stroke="#fff" stroke-width="0.8"/><path d="M8.6 2.8 L11.2 5.4" stroke="#fff" stroke-width="0.8"/></g></svg>
<div class="t" style="left:1796.4px;top:339.18px;font-size:13.2px;color:#333;font-weight:400;font-style:normal;letter-spacing:0px;">Official Pic</div>
<div class="r" style="left:245px;top:376px;width:1645px;height:600px;background:#fff;border-radius:8px;"></div>
<div class="t" style="left:255.4px;top:391.28px;font-size:16.5px;color:#1b305e;font-weight:700;font-style:normal;letter-spacing:0px;">General Information</div>
<div class="r" style="left:245px;top:431px;width:1645px;height:1px;background:#eceff2;"></div>
<svg class="r" style="left:1793px;top:389.5px;" width="14.0" height="12.0" viewBox="0 0 14.0 12.0"><g transform="scale(1.0)"><path d="M8.2 1.4 L2.2 1.4 Q0.8 1.4 0.8 2.8 L0.8 9.6 Q0.8 11 2.2 11 L8.6 11 Q10 11 10 9.6 L10 7.6" fill="none" stroke="#8f97a8" stroke-width="1.3"/><path d="M4.4 8.4 L5 6.3 L10.9 0.5 L12.9 2.5 L7 8.3Z" fill="#8f97a8"/></g></svg>
<div class="r" style="left:1816.3px;top:383px;width:33.7px;height:25px;background:#1b305e;border-radius:3px;"></div>
<svg class="r" style="left:1826.3px;top:388.5px;" width="13.2" height="12" viewBox="0 0 13.2 12"><path d="M5.3 0.3 L7.9 0.3 L7.9 4.2 L10.2 4.2 L6.6 7.8 L3 4.2 L5.3 4.2Z" fill="#fff"/><path d="M0.2 6.9 L3.8 6.9 L6.6 9.4 L9.4 6.9 L13 6.9 L13 11.6 L0.2 11.6Z" fill="#fff"/><circle cx="10" cy="9.5" r="0.55" fill="#1b305e"/><circle cx="11.6" cy="9.5" r="0.55" fill="#1b305e"/></svg>
<div class="r" style="left:260px;top:467px;width:793px;height:32px;background:#ea9494;"></div>
<div class="t" style="left:260px;top:440.72px;font-size:13.5px;color:#1e1e1e;font-weight:400;font-style:normal;letter-spacing:0px;">First Name</div>
<div class="t" style="left:534.2px;top:443.09px;font-size:13.3px;color:#333;font-weight:400;font-style:normal;letter-spacing:0px;">DA. Colby</div>
<div class="t" style="left:260px;top:476.12px;font-size:13.5px;color:#1e1e1e;font-weight:400;font-style:normal;letter-spacing:0px;">Middle Name</div>
<div class="t" style="left:260px;top:508.73px;font-size:13.5px;color:#1e1e1e;font-weight:400;font-style:normal;letter-spacing:0px;">Last Name</div>
<div class="t" style="left:534.2px;top:511.09px;font-size:13.3px;color:#333;font-weight:400;font-style:normal;letter-spacing:0px;">Brock</div>
<div class="r" style="left:260px;top:534px;width:793px;height:1px;background:#e5eef7;"></div>
<div class="t" style="left:260px;top:543.73px;font-size:13.5px;color:#1e1e1e;font-weight:400;font-style:normal;letter-spacing:0px;">Country</div>
<div class="t" style="left:534.2px;top:546.10px;font-size:13.3px;color:#333;font-weight:400;font-style:normal;letter-spacing:0px;">USA</div>
<div class="r" style="left:260px;top:569px;width:793px;height:1px;background:#e5eef7;"></div>
<div class="t" style="left:260px;top:578.73px;font-size:13.5px;color:#1e1e1e;font-weight:400;font-style:normal;letter-spacing:0px;">Address</div>
<div class="t" style="left:534.2px;top:581.10px;font-size:13.3px;color:#333;font-weight:400;font-style:normal;letter-spacing:0px;">4701 Mexicana Road</div>
<div class="r" style="left:260px;top:605px;width:793px;height:1px;background:#e5eef7;"></div>
<div class="t" style="left:260px;top:614.73px;font-size:13.5px;color:#1e1e1e;font-weight:400;font-style:normal;letter-spacing:0px;">PO Box</div>
<div class="r" style="left:260px;top:638px;width:793px;height:1px;background:#e5eef7;"></div>
<div class="t" style="left:260px;top:647.73px;font-size:13.5px;color:#1e1e1e;font-weight:400;font-style:normal;letter-spacing:0px;">Address 2</div>
<div class="r" style="left:260px;top:672px;width:793px;height:1px;background:#e5eef7;"></div>
<div class="t" style="left:260px;top:681.73px;font-size:13.5px;color:#1e1e1e;font-weight:400;font-style:normal;letter-spacing:0px;">City, ST Zip</div>
<div class="t" style="left:534.2px;top:684.10px;font-size:13.3px;color:#333;font-weight:400;font-style:normal;letter-spacing:0px;">Dallas, Texas, 75212</div>
<div class="r" style="left:260px;top:707px;width:793px;height:1px;background:#e5eef7;"></div>
<div class="t" style="left:260px;top:716.73px;font-size:13.5px;color:#1e1e1e;font-weight:400;font-style:normal;letter-spacing:0px;">Mobile Phone</div>
<div class="t" style="left:534.2px;top:719.10px;font-size:13.3px;color:#333;font-weight:400;font-style:normal;letter-spacing:0px;">123-456-7654</div>
<div class="r" style="left:260px;top:742px;width:793px;height:1px;background:#e5eef7;"></div>
<div class="t" style="left:260px;top:751.73px;font-size:13.5px;color:#1e1e1e;font-weight:400;font-style:normal;letter-spacing:0px;">Personal Email</div>
<div class="t" style="left:534.2px;top:754.10px;font-size:13.3px;color:#333;font-weight:400;font-style:normal;letter-spacing:0px;">colby@danikabrownies.com</div>
<div class="r" style="left:260px;top:777px;width:793px;height:1px;background:#e5eef7;"></div>
<div class="t" style="left:260px;top:786.73px;font-size:13.5px;color:#1e1e1e;font-weight:400;font-style:normal;letter-spacing:0px;">Date Of Birth</div>
<div class="t" style="left:534.2px;top:789.10px;font-size:13.3px;color:#333;font-weight:400;font-style:normal;letter-spacing:0px;">09-03-2024</div>
<div class="r" style="left:260px;top:812px;width:793px;height:1px;background:#e5eef7;"></div>
<div class="t" style="left:260px;top:821.73px;font-size:13.5px;color:#1e1e1e;font-weight:400;font-style:normal;letter-spacing:0px;">Race and Ethnicity</div>
<div class="t" style="left:534.2px;top:824.10px;font-size:13.3px;color:#333;font-weight:400;font-style:normal;letter-spacing:0px;">Asian</div>
<div class="r" style="left:260px;top:847px;width:793px;height:1px;background:#e5eef7;"></div>
<div class="t" style="left:260px;top:856.73px;font-size:13.5px;color:#1e1e1e;font-weight:400;font-style:normal;letter-spacing:0px;">Language</div>
<div class="t" style="left:534.2px;top:859.10px;font-size:13.3px;color:#333;font-weight:400;font-style:normal;letter-spacing:0px;">English</div>
<div class="r" style="left:260px;top:882px;width:793px;height:1px;background:#e5eef7;"></div>
<div class="r" style="left:260px;top:466px;width:793px;height:1px;background:#e5eef7;"></div>
<svg class="r" style="left:836px;top:581.5px;" width="8" height="11" viewBox="0 0 8 11"><path d="M4 0.4 C1.9 0.4 0.4 1.9 0.4 4 C0.4 6.6 4 10.6 4 10.6 C4 10.6 7.6 6.6 7.6 4 C7.6 1.9 6.1 0.4 4 0.4Z" fill="#2f89c0"/><circle cx="4" cy="3.9" r="1.5" fill="#fff"/></svg>
<div class="t" style="left:1083px;top:440.72px;font-size:13.5px;color:#1e1e1e;font-weight:400;font-style:normal;letter-spacing:0px;">Social Security #</div>
<div class="t" style="left:1357px;top:443.09px;font-size:13.3px;color:#333;font-weight:400;font-style:normal;letter-spacing:0px;">*****4345</div>
<div class="r" style="left:1083px;top:466px;width:792px;height:1px;background:#e5eef7;"></div>
<div class="t" style="left:1083px;top:475.72px;font-size:13.5px;color:#1e1e1e;font-weight:400;font-style:normal;letter-spacing:0px;">Drivers License</div>
<div class="t" style="left:1357px;top:478.09px;font-size:13.3px;color:#333;font-weight:400;font-style:normal;letter-spacing:0px;">6543234565432</div>
<div class="r" style="left:1083px;top:501px;width:792px;height:1px;background:#e5eef7;"></div>
<div class="t" style="left:1083px;top:510.73px;font-size:13.5px;color:#1e1e1e;font-weight:400;font-style:normal;letter-spacing:0px;">Region</div>
<div class="t" style="left:1357px;top:513.10px;font-size:13.3px;color:#333;font-weight:400;font-style:normal;letter-spacing:0px;">South Central</div>
<div class="r" style="left:1083px;top:536px;width:792px;height:1px;background:#e5eef7;"></div>
<div class="t" style="left:1083px;top:545.73px;font-size:13.5px;color:#1e1e1e;font-weight:400;font-style:normal;letter-spacing:0px;">Branch</div>
<div class="t" style="left:1357px;top:548.10px;font-size:13.3px;color:#333;font-weight:400;font-style:normal;letter-spacing:0px;">Dallas</div>
<div class="t" style="left:1083px;top:718.23px;font-size:13.5px;color:#1e1e1e;font-weight:400;font-style:normal;letter-spacing:0px;">Branch Access</div>
<div class="r" style="left:1083px;top:741px;width:792px;height:1px;background:#e5eef7;"></div>
<div class="t" style="left:1083px;top:750.73px;font-size:13.5px;color:#1e1e1e;font-weight:400;font-style:normal;letter-spacing:0px;">Salesman</div>
<div class="r" style="left:1083px;top:774px;width:792px;height:1px;background:#e5eef7;"></div>
<div class="t" style="left:1083px;top:783.73px;font-size:13.5px;color:#1e1e1e;font-weight:400;font-style:normal;letter-spacing:0px;">Employee Status</div>
<div class="t" style="left:1357px;top:786.10px;font-size:13.3px;color:#333;font-weight:400;font-style:normal;letter-spacing:0px;">Active</div>
<div class="r" style="left:1083px;top:809px;width:792px;height:1px;background:#e5eef7;"></div>
<div class="t" style="left:1083px;top:818.73px;font-size:13.5px;color:#1e1e1e;font-weight:400;font-style:normal;letter-spacing:0px;">Login Unique ID</div>
<div class="t" style="left:1357px;top:821.10px;font-size:13.3px;color:#333;font-weight:400;font-style:normal;letter-spacing:0px;">94005</div>
<div class="r" style="left:1083px;top:844px;width:792px;height:1px;background:#e5eef7;"></div>
<div class="t" style="left:1083px;top:853.73px;font-size:13.5px;color:#1e1e1e;font-weight:400;font-style:normal;letter-spacing:0px;">IVR ID</div>
<div class="t" style="left:1357px;top:856.10px;font-size:13.3px;color:#333;font-weight:400;font-style:normal;letter-spacing:0px;">9707</div>
<div class="r" style="left:1083px;top:879px;width:792px;height:1px;background:#e5eef7;"></div>
<div class="t" style="left:1083px;top:888.73px;font-size:13.5px;color:#1e1e1e;font-weight:400;font-style:normal;letter-spacing:0px;">Payroll ID</div>
<div class="t" style="left:1357px;top:891.10px;font-size:13.3px;color:#333;font-weight:400;font-style:normal;letter-spacing:0px;">94005</div>
<div class="r" style="left:1083px;top:914px;width:792px;height:1px;background:#e5eef7;"></div>
<div class="t" style="left:1083px;top:923.73px;font-size:13.5px;color:#1e1e1e;font-weight:400;font-style:normal;letter-spacing:0px;">Current Rank</div>
<div class="t" style="left:1357px;top:926.10px;font-size:13.3px;color:#333;font-weight:400;font-style:normal;letter-spacing:0px;">Purple</div>
<div class="r" style="left:1083px;top:949px;width:792px;height:1px;background:#e5eef7;"></div>
<div class="r" style="left:1083px;top:571px;width:792px;height:137.7px;background:#e7f0f9;"></div>
<div class="t" style="left:1186.6px;top:440.18px;font-size:16.5px;color:#e8112d;font-weight:400;font-style:normal;letter-spacing:0px;">*</div>
<div class="t" style="left:1098.2px;top:581.12px;font-size:13.5px;color:#1e1e1e;font-weight:400;font-style:normal;letter-spacing:0px;">Pay Type</div>
<div class="t" style="left:1366.7px;top:583.10px;font-size:13.3px;color:#333;font-weight:400;font-style:normal;letter-spacing:0px;">Hourly Pay</div>
<div class="t" style="left:1098.2px;top:615.82px;font-size:13.5px;color:#1e1e1e;font-weight:400;font-style:normal;letter-spacing:0px;">Workers Comp Code</div>
<div class="t" style="left:1098.2px;top:648.82px;font-size:13.5px;color:#1e1e1e;font-weight:400;font-style:normal;letter-spacing:0px;">Pay Frequency</div>
<div class="t" style="left:1098.2px;top:682.52px;font-size:13.5px;color:#1e1e1e;font-weight:400;font-style:normal;letter-spacing:0px;">Hourly Pay</div>
<div class="t" style="left:1366.7px;top:684.90px;font-size:13.3px;color:#333;font-weight:400;font-style:normal;letter-spacing:0px;">$11.00/Hrs</div>
<svg class="r" style="left:0px;top:0px;" width="1893" height="950" viewBox="0 0 1893 950">
<defs><filter id="rough" x="-5%" y="-5%" width="110%" height="110%"><feTurbulence type="fractalNoise" baseFrequency="0.9" numOctaves="1" seed="4" result="n"/><feDisplacementMap in="SourceGraphic" in2="n" scale="1.6"/></filter></defs>
<g filter="url(#rough)">
<path d="M256.5 106 L560.5 106" fill="none" stroke="#ff2f1c" stroke-width="3.4" stroke-linecap="round"/>
<path d="M116.3 200 L134.8 188.5 L134.8 211.8Z" fill="#ff2f1c" stroke="#ff2f1c" stroke-width="1" stroke-linejoin="round"/>
<path d="M133 199.9 L198 199.9" stroke="#ff2f1c" stroke-width="4.5"/>
<rect x="6.2" y="246.8" width="220.8" height="28.9" fill="none" stroke="#ff2f1c" stroke-width="3.8"/>
<ellipse cx="282" cy="218" rx="44.5" ry="25.5" fill="none" stroke="#ff2f1c" stroke-width="3.2" transform="rotate(-3 282 218)"/>
<path d="M1579 397.6 L1762 397.6" stroke="#ff2f1c" stroke-width="4.2"/>
<path d="M1778 397.9 L1759.7 386.2 L1759.7 409Z" fill="#ff2f1c" stroke="#ff2f1c" stroke-width="1" stroke-linejoin="round"/>
<ellipse cx="1798.5" cy="395.3" rx="15.8" ry="18.6" fill="none" stroke="#ff2f1c" stroke-width="3.4"/>
</g>
</svg>
</body></html>
